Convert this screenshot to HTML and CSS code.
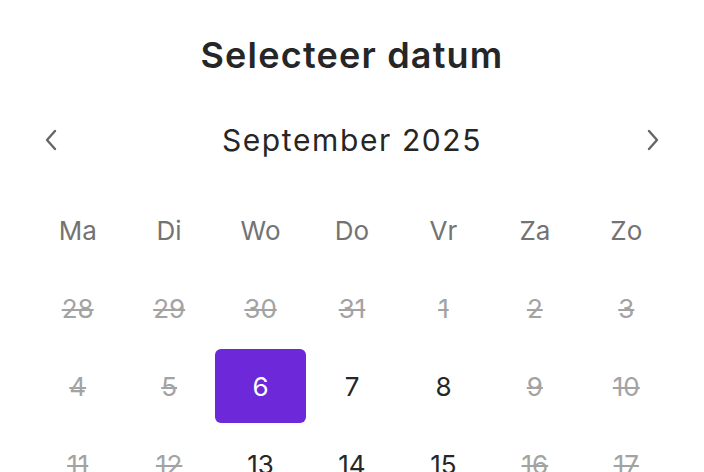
FILE: index.html
```html
<!DOCTYPE html>
<html lang="nl">
<head>
<meta charset="utf-8">
<title>Selecteer datum</title>
<link rel="stylesheet" href="styles.css">
</head>
<body>
<div class="picker">
  <h1 class="title">Selecteer datum</h1>
  <div class="nav">
    <button class="nav-btn" aria-label="Vorige maand">
      <svg width="14" height="22" viewBox="0 0 14 22"><path d="M11 2 L3 11 L11 20" fill="none" stroke="#666666" stroke-width="2.4" stroke-linecap="round" stroke-linejoin="round"/></svg>
    </button>
    <div class="month">September 2025</div>
    <button class="nav-btn" aria-label="Volgende maand">
      <svg width="14" height="22" viewBox="0 0 14 22"><path d="M3 2 L11 11 L3 20" fill="none" stroke="#666666" stroke-width="2.4" stroke-linecap="round" stroke-linejoin="round"/></svg>
    </button>
  </div>
  <div class="grid">
    <div class="wd">Ma</div><div class="wd">Di</div><div class="wd">Wo</div><div class="wd">Do</div><div class="wd">Vr</div><div class="wd">Za</div><div class="wd">Zo</div>
    <div class="day off">28</div><div class="day off">29</div><div class="day off">30</div><div class="day off">31</div><div class="day off">1</div><div class="day off">2</div><div class="day off">3</div>
    <div class="day off">4</div><div class="day off">5</div><div class="day sel">6</div><div class="day">7</div><div class="day">8</div><div class="day off">9</div><div class="day off">10</div>
    <div class="day off">11</div><div class="day off">12</div><div class="day">13</div><div class="day">14</div><div class="day">15</div><div class="day off">16</div><div class="day off">17</div>
  </div>
</div>
</body>
</html>
```
FILE: styles.css
```css
html, body {
  margin: 0;
  padding: 0;
  background: #ffffff;
  overflow: hidden;
}
body {
  font-family: "Inter", "Liberation Sans", sans-serif;
  color: #262626;
}
.picker {
  width: 640px;
  margin: 0 auto;
  padding-top: 31px;
}
.title {
  margin: 0;
  font-size: 36px;
  line-height: 48px;
  font-weight: 600;
  letter-spacing: 1.2px;
  text-align: center;
  color: #262626;
}
.nav {
  margin-top: 37px;
  height: 48px;
  display: flex;
  align-items: center;
  justify-content: space-between;
  padding: 0 12px;
}
.nav-btn {
  border: 0;
  background: none;
  padding: 0;
  width: 14px;
  height: 22px;
  display: flex;
}
.month {
  font-size: 30px;
  font-weight: 400;
  letter-spacing: 1.6px;
  color: #262626;
}
.grid {
  margin-top: 29px;
  display: grid;
  grid-template-columns: repeat(7, 1fr);
  grid-auto-rows: 74px;
  row-gap: 4px;
}
.wd, .day {
  display: flex;
  align-items: center;
  justify-content: center;
  font-size: 26px;
}
.wd {
  color: #737373;
  font-weight: 400;
}
.day {
  color: #262626;
  border-radius: 6px;
}
.day.off {
  color: #a3a3a3;
  text-decoration: line-through;
  text-decoration-thickness: 2px;
}
.day.sel {
  background: #6d28d9;
  color: #ffffff;
}
```
